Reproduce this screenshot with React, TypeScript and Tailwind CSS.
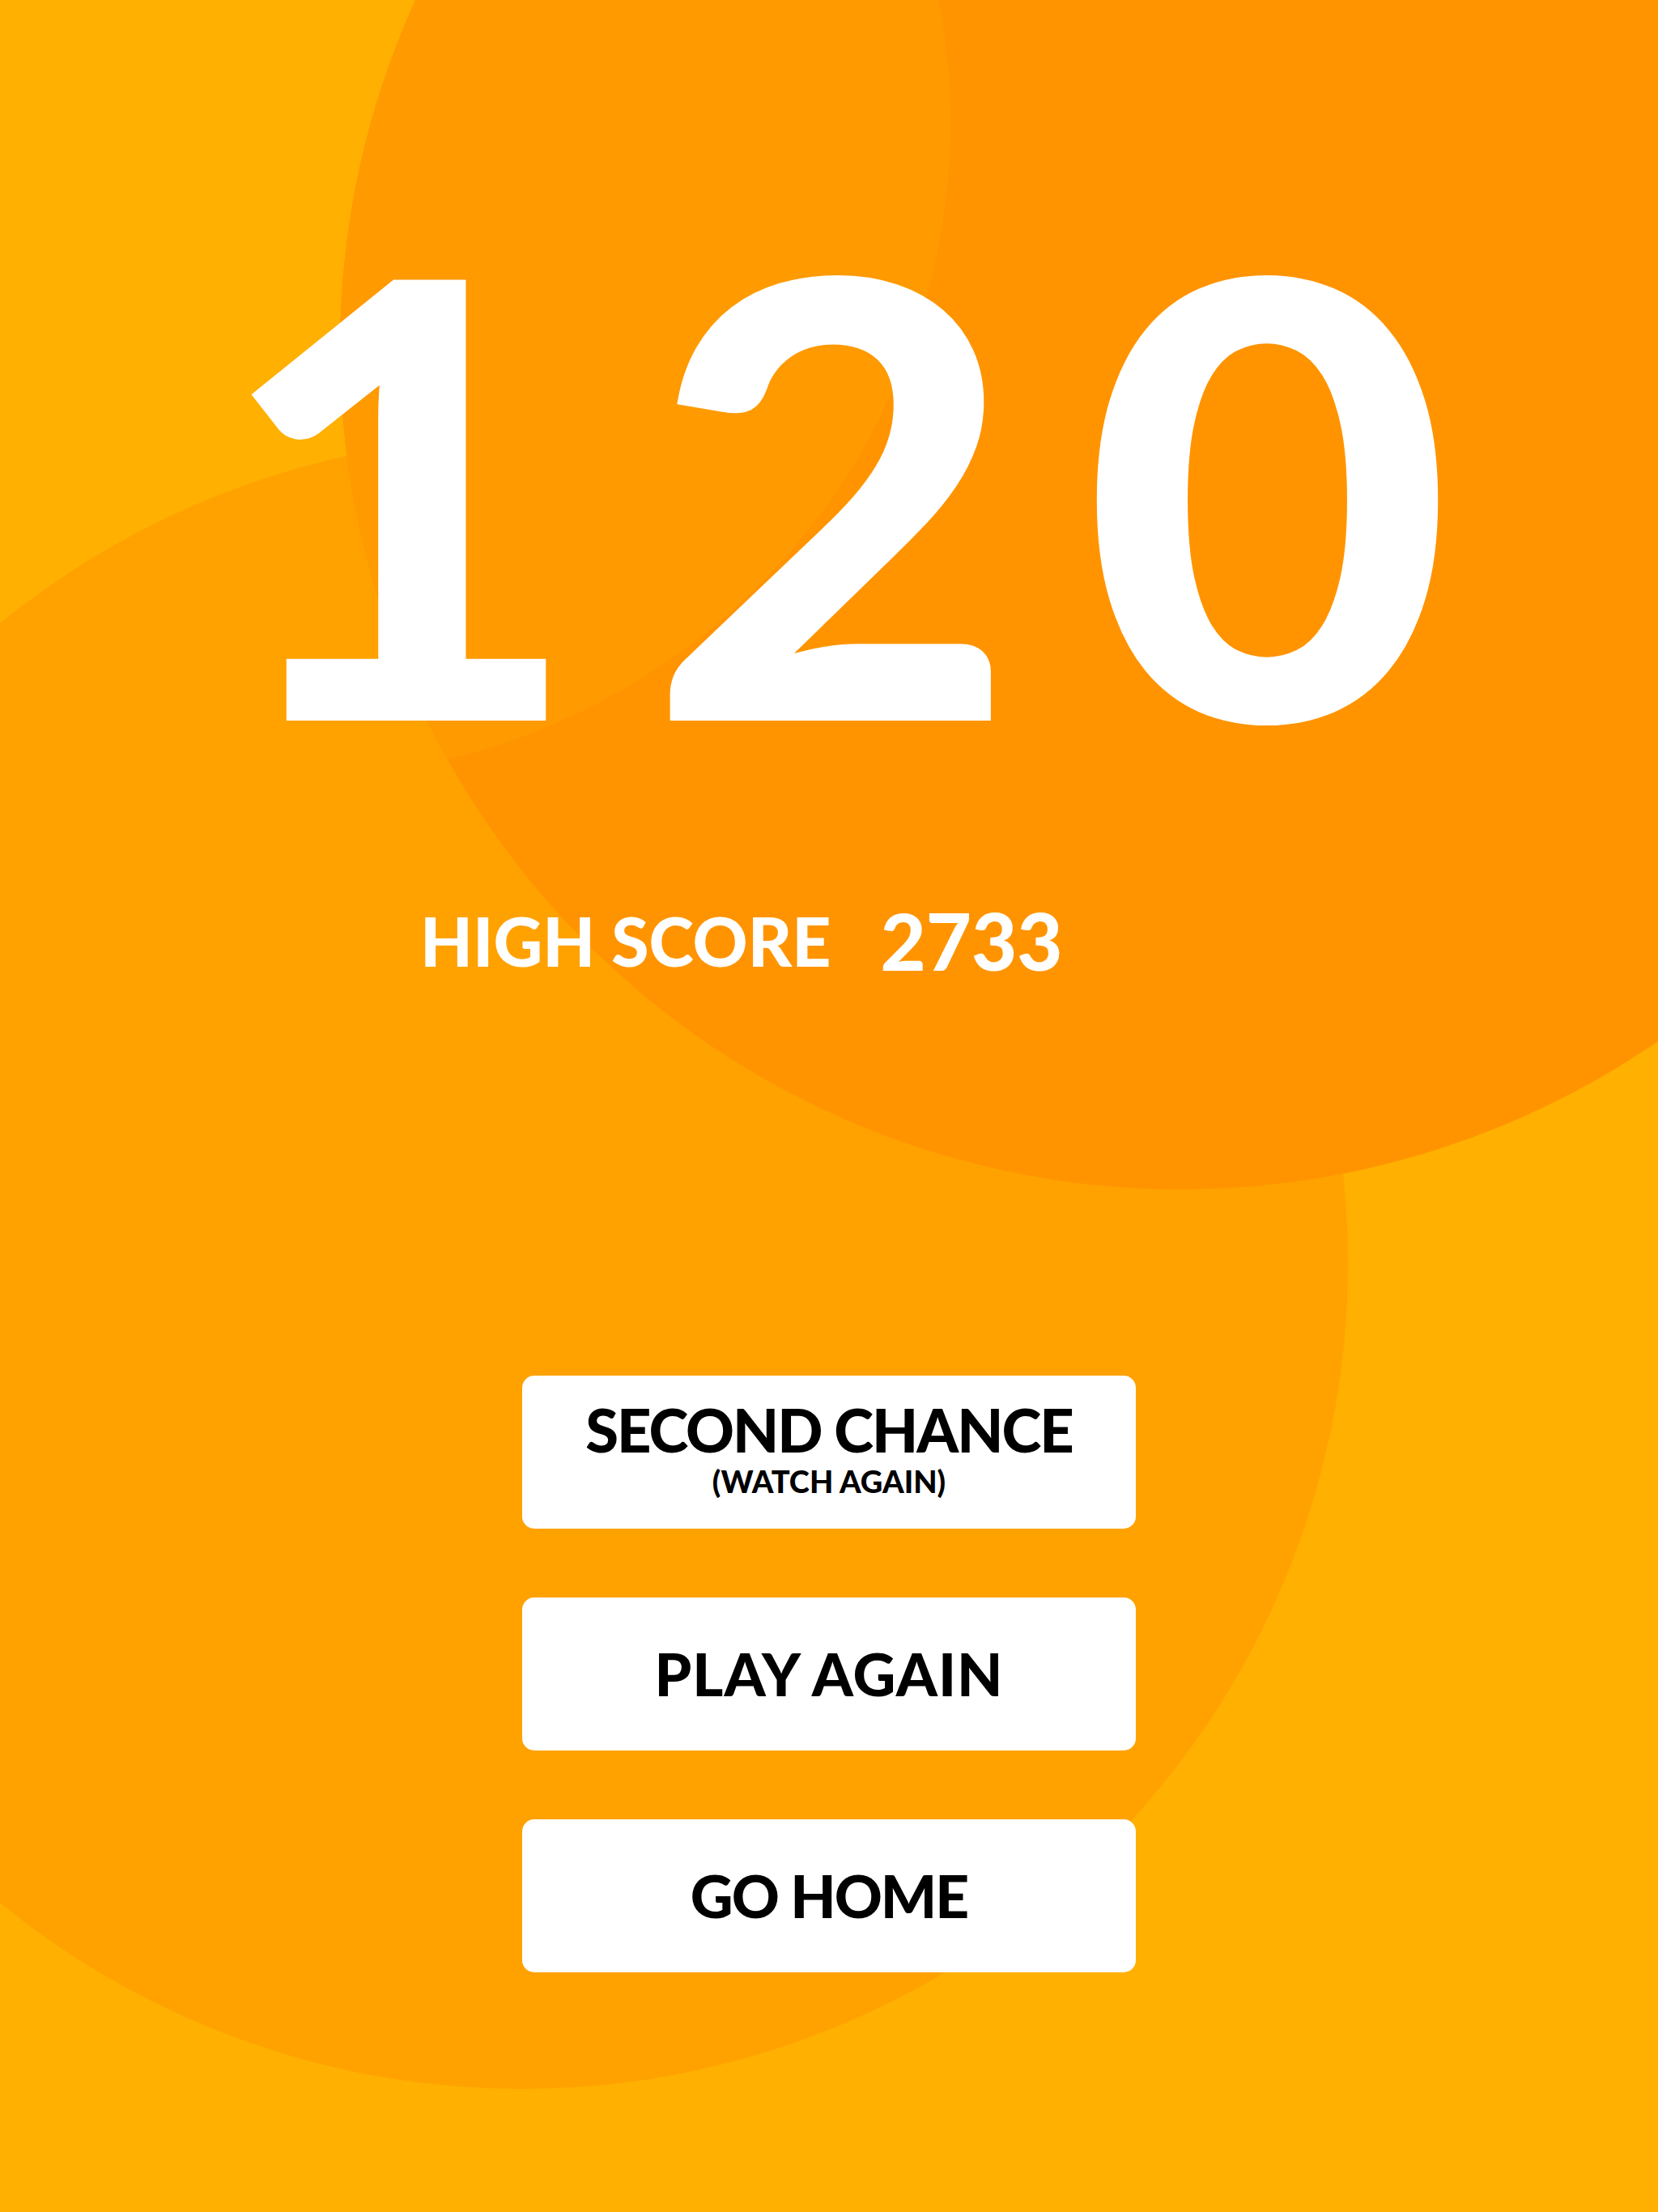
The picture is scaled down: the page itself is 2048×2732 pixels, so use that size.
import React from "react";

// Game over screen: score, best score and the three actions

const actions = [
  { label: "PLAY AGAIN", cls: "tracking-[1px]" },
  { label: "GO HOME", cls: "tracking-[-2px]" },
];

const App: React.FC = () => {
  return (
    <div className="relative w-[2048px] h-[2732px] overflow-hidden bg-[#FFB000] font-['Lato','Liberation_Sans',sans-serif]">
      {/* backdrop circles */}
      <div className="absolute left-[-375px] top-[540px] w-[2040px] h-[2040px] rounded-full bg-[#FFA200]" />
      <div className="absolute left-[420px] top-[-609px] w-[2078px] h-[2078px] rounded-full overflow-hidden bg-[#FF9400]">
        <div className="absolute left-[-864px] top-[-49px] w-[1618px] h-[1618px] rounded-full bg-[#FF9A00]" />
      </div>

      <div className="relative flex flex-col">
        {/* current score */}
        <div className="flex w-full pl-[264px] pt-[225px]">
          <span className="origin-left scale-x-[1.05] text-[750px] leading-none font-black tracking-[76px] text-white">
            120
          </span>
        </div>

        {/* best score */}
        <div className="flex w-full items-center pl-[519px] mt-[138px]">
          <span className="text-[84px] leading-none font-black text-white">HIGH SCORE</span>
          <span className="ml-[61px] text-[97px] leading-none font-black text-white">2733</span>
        </div>

        {/* actions */}
        <div className="flex flex-col items-center gap-[85px] mt-[489px]">
          <button className="flex flex-col items-center w-[758px] h-[189px] pt-[30px] rounded-[15px] bg-white text-black">
            <span className="text-[74px] leading-none font-black tracking-[-2px]">SECOND CHANCE</span>
            <span className="mt-[7px] text-[38px] leading-none font-black">(WATCH AGAIN)</span>
          </button>
          {actions.map((a) => (
            <button
              key={a.label}
              className="flex items-center justify-center w-[758px] h-[189px] rounded-[15px] bg-white text-black"
            >
              <span className={`text-[73px] leading-none font-black ${a.cls}`}>{a.label}</span>
            </button>
          ))}
        </div>
      </div>
    </div>
  );
};

export default App;
